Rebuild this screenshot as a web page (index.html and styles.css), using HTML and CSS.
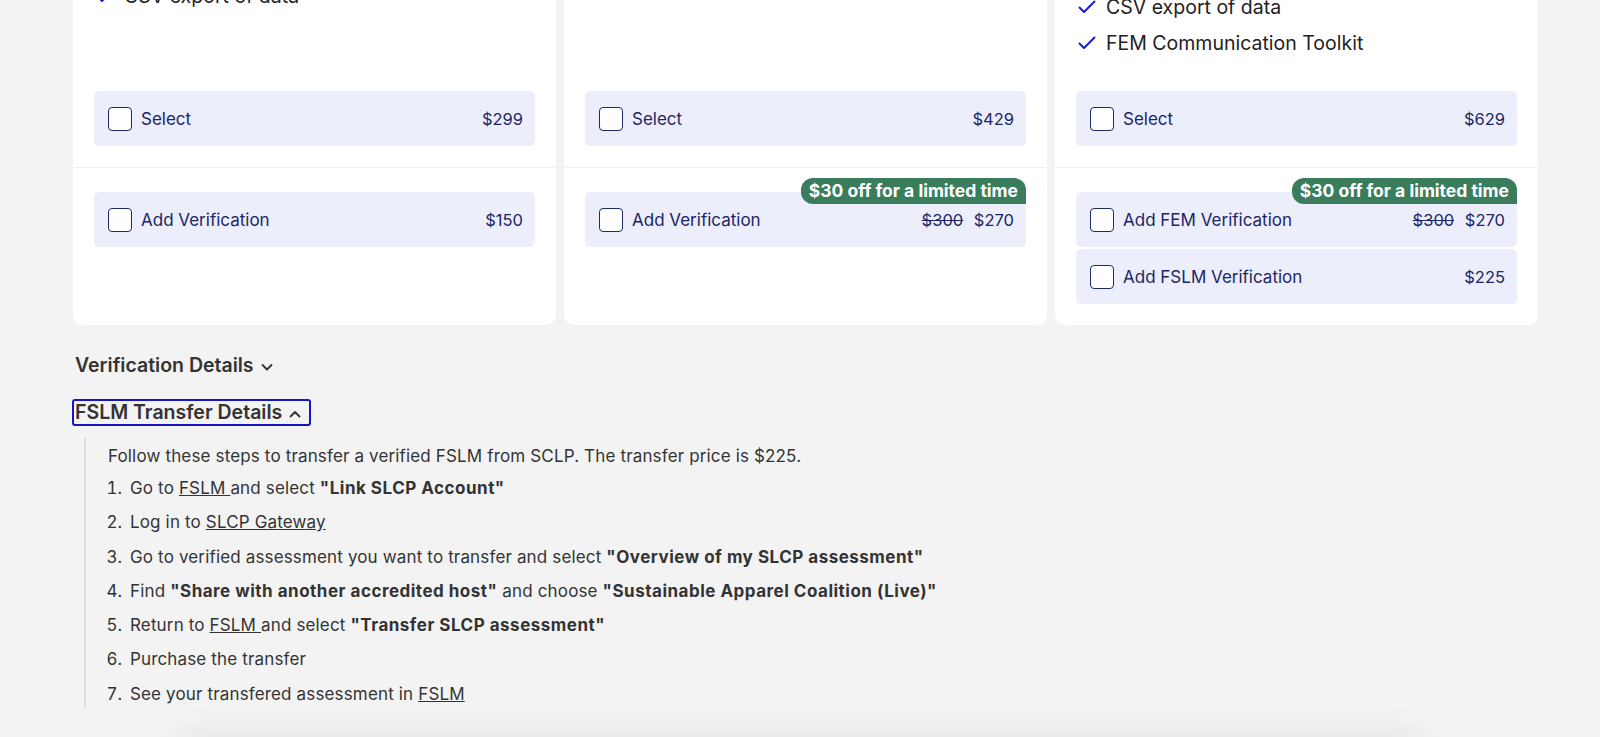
FILE: index.html
```html
<!DOCTYPE html>
<html>
<head>
    <title>Plans</title>
    <link rel="stylesheet" href="styles.css">
</head>
<body>
    <main class="page">
        <section class="plans">
            <article class="plan">
                <ul class="features features-short">
                    <li><svg class="check" viewBox="0 0 18 14"><polyline points="1.5,7.5 6,12 16.5,1.5"/></svg>Facility Environmental Module</li>
                    <li><svg class="check" viewBox="0 0 18 14"><polyline points="1.5,7.5 6,12 16.5,1.5"/></svg>Self-assessment</li>
                    <li><svg class="check" viewBox="0 0 18 14"><polyline points="1.5,7.5 6,12 16.5,1.5"/></svg>CSV export of data</li>
                </ul>
                <div class="plan-select">
                    <label class="option">
                        <span class="box"></span>
                        <span class="option-name">Select</span>
                        <span class="price">$299</span>
                    </label>
                </div>
                <div class="plan-addons">
                    <label class="option">
                        <span class="box"></span>
                        <span class="option-name">Add Verification</span>
                        <span class="price">$150</span>
                    </label>
                </div>
            </article>

            <article class="plan">
                <ul class="features">
                    <li><svg class="check" viewBox="0 0 18 14"><polyline points="1.5,7.5 6,12 16.5,1.5"/></svg>Facility Social Labor Module</li>
                </ul>
                <div class="plan-select">
                    <label class="option">
                        <span class="box"></span>
                        <span class="option-name">Select</span>
                        <span class="price">$429</span>
                    </label>
                </div>
                <div class="plan-addons">
                    <label class="option">
                        <span class="badge">$30 off for a limited time</span>
                        <span class="box"></span>
                        <span class="option-name">Add Verification</span>
                        <span class="price"><s>$300</s> $270</span>
                    </label>
                </div>
            </article>

            <article class="plan">
                <ul class="features">
                    <li><svg class="check" viewBox="0 0 18 14"><polyline points="1.5,7.5 6,12 16.5,1.5"/></svg>FEM and FSLM modules</li>
                    <li><svg class="check" viewBox="0 0 18 14"><polyline points="1.5,7.5 6,12 16.5,1.5"/></svg>Benchmark scores</li>
                    <li><svg class="check" viewBox="0 0 18 14"><polyline points="1.5,7.5 6,12 16.5,1.5"/></svg>CSV export of data</li>
                    <li><svg class="check" viewBox="0 0 18 14"><polyline points="1.5,7.5 6,12 16.5,1.5"/></svg>FEM Communication Toolkit</li>
                </ul>
                <div class="plan-select">
                    <label class="option">
                        <span class="box"></span>
                        <span class="option-name">Select</span>
                        <span class="price">$629</span>
                    </label>
                </div>
                <div class="plan-addons">
                    <label class="option">
                        <span class="badge">$30 off for a limited time</span>
                        <span class="box"></span>
                        <span class="option-name">Add FEM Verification</span>
                        <span class="price"><s>$300</s> $270</span>
                    </label>
                    <label class="option">
                        <span class="box"></span>
                        <span class="option-name">Add FSLM Verification</span>
                        <span class="price">$225</span>
                    </label>
                </div>
            </article>
        </section>

        <section class="details">
            <button class="toggle" type="button">Verification Details
                <svg class="chevron" viewBox="0 0 12 8"><polyline points="1.5,2 6,6.5 10.5,2"/></svg>
            </button>
            <button class="toggle is-focused" type="button">FSLM Transfer Details
                <svg class="chevron" viewBox="0 0 12 8"><polyline points="1.5,6.5 6,2 10.5,6.5"/></svg>
            </button>

            <div class="transfer">
                <p>Follow these steps to transfer a verified FSLM from SCLP. The transfer price is $225.</p>
                <ol>
                    <li>Go to <a href="#">FSLM </a>and select <b>"Link SLCP Account"</b></li>
                    <li>Log in to <a href="#">SLCP Gateway</a></li>
                    <li>Go to verified assessment you want to transfer and select <b>"Overview of my SLCP assessment"</b></li>
                    <li>Find <b>"Share with another accredited host"</b> and choose <b>"Sustainable Apparel Coalition (Live)"</b></li>
                    <li>Return to <a href="#">FSLM </a>and select <b>"Transfer SLCP assessment"</b></li>
                    <li>Purchase the transfer</li>
                    <li>See your transfered assessment in <a href="#">FSLM</a></li>
                </ol>
            </div>
        </section>
    </main>
    <div class="footer-shadow"></div>
</body>
</html>
```

FILE: styles.css
```css
body {
    margin: 0;
    background-color: #f3f3f3;
    font-family: Inter, "Noto Sans", sans-serif;
    color: #333;
    overflow: hidden;
}
.page {
    padding: 0 62px 0 73px;
}
.plans {
    display: grid;
    grid-template-columns: repeat(3, 1fr);
    grid-template-rows: auto auto 1fr;
    column-gap: 8px;
    margin-top: -101px;
}
.plan {
    display: grid;
    grid-row: span 3;
    grid-template-rows: subgrid;
    background-color: #fff;
    border-radius: 10px;
    padding-bottom: 21px;
}
.features {
    list-style: none;
    margin: 0;
    padding: 24px 21px 36px 23px;
    font-size: 19.5px;
    line-height: 24px;
    color: #222;
}
.features li {
    display: flex;
    align-items: center;
    margin-bottom: 12px;
    white-space: nowrap;
}
.features li:last-child {
    margin-bottom: 0;
}
.features-short {
    margin-top: -11px;
}
.check {
    width: 18px;
    height: 14px;
    flex: none;
    margin-right: 10px;
    fill: none;
    stroke: #1a1ad6;
    stroke-width: 2;
    stroke-linecap: round;
    stroke-linejoin: round;
}
.plan-select {
    padding: 0 21px 21px;
    border-bottom: 1px solid #f0f0f2;
}
.plan-addons {
    display: flex;
    flex-direction: column;
    gap: 2px;
    padding: 24px 21px 0;
}
.option {
    position: relative;
    display: flex;
    align-items: center;
    height: 55px;
    padding: 0 12px 0 14px;
    background-color: #eceefb;
    border-radius: 5px;
    font-size: 17px;
    color: #1c2566;
    cursor: pointer;
}
.box {
    width: 24px;
    height: 24px;
    box-sizing: border-box;
    border: 1.5px solid #1f2a66;
    border-radius: 4px;
    background-color: #fff;
    margin-right: 9px;
}
.option-name {
    flex: 1;
}
.price {
    font-size: 16.5px;
}
.price s {
    margin-right: 6px;
}
.badge {
    position: absolute;
    top: -14px;
    right: 0;
    height: 26px;
    line-height: 26px;
    padding: 0 8px;
    background-color: #3a7d5c;
    color: #fff;
    font-weight: 700;
    font-size: 17.5px;
    border-radius: 12px 12px 0 12px;
}
.details {
    padding-top: 27px;
    margin-left: -1px;
}
.toggle {
    display: flex;
    align-items: center;
    gap: 7px;
    margin: 0 0 20px;
    padding: 0 8px 0 1px;
    border: 2px solid transparent;
    border-radius: 3px;
    background: none;
    font-family: Inter, "Noto Sans", sans-serif;
    font-size: 19.5px;
    line-height: 23px;
    font-weight: 600;
    color: #333;
    cursor: pointer;
}
.toggle.is-focused {
    border-color: #1616c8;
    margin-bottom: 12px;
}
.chevron {
    width: 12px;
    height: 8px;
    margin-top: 3px;
    fill: none;
    stroke: #333;
    stroke-width: 1.8;
    stroke-linecap: round;
    stroke-linejoin: round;
}
.transfer {
    margin-left: 12px;
    border-left: 2px solid #dcdcdc;
    padding: 6px 0 1px 22px;
    font-size: 17px;
    line-height: 24px;
    letter-spacing: 0.15px;
}
.transfer p {
    margin: 0;
}
.transfer ol {
    margin: 8px 0 0;
    padding-left: 19px;
}
.transfer li {
    padding-left: 3px;
}
.transfer li + li {
    margin-top: 10.3px;
}
.transfer a {
    color: #333;
}
.transfer b {
    font-weight: 700;
    letter-spacing: 0.5px;
}
.footer-shadow {
    position: fixed;
    left: 170px;
    right: 170px;
    bottom: -60px;
    height: 60px;
    border-radius: 60px;
    box-shadow: 0 0 40px rgba(0, 0, 0, 0.07);
    background-color: #f3f3f3;
}
```
